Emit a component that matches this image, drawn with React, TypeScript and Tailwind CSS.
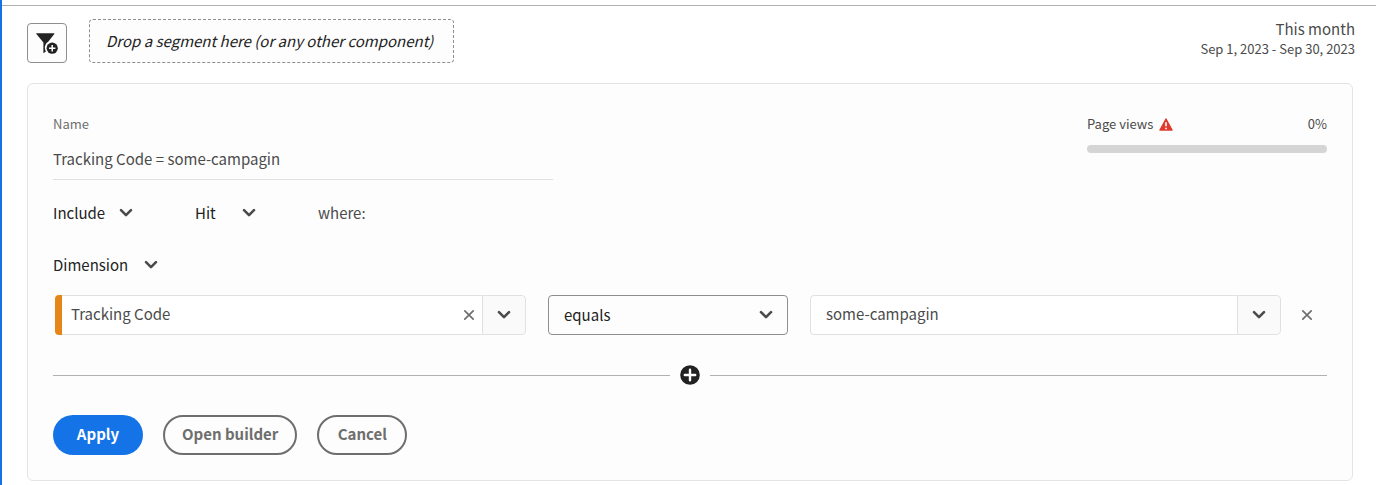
import React, { useState } from 'react';

type IconProps = { className?: string };

const Chevron = ({ className = '' }: IconProps) => (
  <svg viewBox="0 0 14 10" className={`w-3.5 h-2.5 ${className}`} fill="none" stroke="#4b4b4b" strokeWidth="2.6" strokeLinecap="round" strokeLinejoin="round" aria-hidden="true">
    <path d="M2 2.2 L7 7.2 L12 2.2" />
  </svg>
);

const Cross = () => (
  <svg viewBox="0 0 12 12" className="w-3 h-3" fill="none" stroke="#6e6e6e" strokeWidth="1.7" strokeLinecap="round" aria-hidden="true">
    <path d="M1.8 1.8 L10.2 10.2 M10.2 1.8 L1.8 10.2" />
  </svg>
);

const FilterAdd = () => (
  <svg viewBox="0 0 22 22" className="w-[22px] h-[22px]" aria-hidden="true">
    <path d="M0.4 1.2 H18 a0.4 0.4 0 0 1 0.3 0.7 L12.4 9.6 A7 7 0 0 0 9.9 19.4 L7.4 21.2 V10.6 L0.2 1.8 a0.4 0.4 0 0 1 0.2 -0.6 Z" fill="#222" />
    <circle cx="16.2" cy="16.2" r="5.6" fill="#222" />
    <path d="M16.2 13 V19.4 M13 16.2 H19.4" stroke="#fff" strokeWidth="1.5" />
  </svg>
);

const AddCircle = () => (
  <svg viewBox="0 0 20 20" className="w-5 h-5" aria-hidden="true">
    <circle cx="10" cy="10" r="9.8" fill="#222" />
    <path d="M10 4.8 V15.2 M4.8 10 H15.2" stroke="#fff" strokeWidth="2.4" strokeLinecap="round" />
  </svg>
);

const Alert = () => (
  <svg viewBox="0 0 14 13" className="w-3.5 h-[13px]" aria-hidden="true">
    <path d="M6.5 0.6 a0.6 0.6 0 0 1 1 0 L13.6 11.8 a0.6 0.6 0 0 1 -0.5 0.9 H0.9 a0.6 0.6 0 0 1 -0.5 -0.9 Z" fill="#e03a2e" />
    <path d="M7 4.2 V8.3 M7 9.7 V11.2" stroke="#fff" strokeWidth="1.6" />
  </svg>
);

type PickerProps = {
  label: string;
  options: string[];
  className: string;
  chevronClassName?: string;
};

function Picker({ label, options, className, chevronClassName = 'right-0' }: PickerProps) {
  const [value, setValue] = useState(options[0]);

  return (
    <div className="relative flex items-center">
      <select
        aria-label={label}
        value={value}
        onChange={(e) => setValue(e.target.value)}
        className={`appearance-none bg-transparent text-[#222] cursor-pointer ${className}`}
      >
        {options.map((option) => (
          <option key={option}>{option}</option>
        ))}
      </select>
      <Chevron className={`absolute pointer-events-none ${chevronClassName}`} />
    </div>
  );
}

type ComboProps = {
  label: string;
  initial: string;
  dimension?: boolean;
};

function ComboField({ label, initial, dimension = false }: ComboProps) {
  const [value, setValue] = useState(initial);

  return (
    <div className="flex flex-1 min-w-0 h-10 rounded overflow-hidden">
      {dimension && <div className="w-[7px] shrink-0 bg-[#e68619]" />}
      <div className={`flex flex-1 min-w-0 bg-white border-y border-[#e1e1e1] ${dimension ? '' : 'rounded-l border-l'}`}>
        <input
          type="text"
          aria-label={label}
          value={value}
          onChange={(e) => setValue(e.target.value)}
          className={`flex-1 min-w-0 pb-0.5 bg-transparent outline-none ${dimension ? 'pl-[9px]' : 'pl-[15px]'}`}
        />
        {dimension && (
          <button aria-label="Clear" onClick={() => setValue('')} className="w-[26px] flex items-center justify-center">
            <Cross />
          </button>
        )}
      </div>
      <button
        aria-label={`Show ${label} options`}
        className="w-11 shrink-0 flex items-center justify-center rounded-r border border-[#e1e1e1] bg-[#fafafa]"
      >
        <Chevron />
      </button>
    </div>
  );
}

function App() {
  const [name, setName] = useState('Tracking Code = some-campagin');

  return (
    <div className="min-h-screen bg-white border-l-2 border-[#1473e6] font-['Noto_Sans_CJK_SC',sans-serif] text-[15px] leading-6 text-[#4b4b4b]">
      <div className="h-1.5 border-b border-[#b1b1b1]" />

      <header className="flex items-start justify-between pl-[25px] pr-[21px] pt-[13px]">
        <div className="flex items-end gap-[22px]">
          <button
            aria-label="Add segment"
            className="w-10 h-10 flex items-center justify-center rounded border border-[#8e8e8e] bg-[#fdfdfd]"
          >
            <FilterAdd />
          </button>
          <div className="h-11 flex items-center px-4 min-w-[365px] rounded border border-dashed border-[#8e8e8e] bg-[#fdfdfd] italic text-[#222]">
            Drop a segment here (or any other component)
          </div>
        </div>
        <div className="text-right">
          <div className="leading-5">This month</div>
          <div className="text-[13px] leading-5">Sep 1, 2023 - Sep 30, 2023</div>
        </div>
      </header>

      <main className="mt-5 ml-[25px] mr-[23px] px-[25px] pt-[30px] pb-[25px] rounded-md border border-[#e4e4e4] bg-[#fdfdfd]">
        <div className="flex items-start justify-between">
          <div className="w-[500px]">
            <label htmlFor="segment-name" className="block text-[13px] leading-5 text-[#6e6e6e]">
              Name
            </label>
            <input
              id="segment-name"
              type="text"
              value={name}
              onChange={(e) => setName(e.target.value)}
              className="mt-1.5 w-full h-10 pb-0.5 border-b border-[#e1e1e1] bg-transparent outline-none"
            />
          </div>
          <div className="w-60">
            <div className="flex items-center text-[13px] leading-5">
              <span>Page views</span>
              <span className="ml-1.5">
                <Alert />
              </span>
              <span className="ml-auto">0%</span>
            </div>
            <div
              role="progressbar"
              aria-label="Page views"
              aria-valuenow={0}
              className="mt-[11px] h-2 rounded-full bg-[#d5d5d5]"
            />
          </div>
        </div>

        <div className="mt-[17px] flex items-center gap-[62px] h-8">
          <Picker label="Include or exclude" options={['Include', 'Exclude']} className="w-20 h-8" />
          <Picker label="Container" options={['Hit', 'Visit', 'Visitor']} className="w-[61px] h-8" />
          <span>where:</span>
        </div>

        <div className="mt-5 flex h-8">
          <Picker label="Component type" options={['Dimension', 'Metric', 'Date range']} className="w-[105px] h-8" />
        </div>

        <div className="mt-3.5 pl-0.5 flex items-center gap-1.5">
          <div className="flex flex-1 min-w-0 gap-[22px]">
            <ComboField label="Dimension" initial="Tracking Code" dimension />
            <Picker
              label="Operator"
              options={['equals', 'does not equal', 'contains']}
              className="w-60 h-10 pl-[15px] rounded border border-[#8e8e8e]"
              chevronClassName="right-[15px]"
            />
            <ComboField label="Value" initial="some-campagin" />
          </div>
          <button aria-label="Remove rule" className="w-10 h-10 flex items-center justify-center">
            <Cross />
          </button>
        </div>

        <div className="flex items-center h-20">
          <div className="flex-1 h-px bg-[#b1b1b1]" />
          <button aria-label="Add rule" className="w-10 h-10 flex items-center justify-center">
            <AddCircle />
          </button>
          <div className="flex-1 h-px bg-[#b1b1b1]" />
        </div>

        <div className="flex gap-5 font-bold">
          <button className="h-10 min-w-[90px] px-[17px] pb-0.5 rounded-full bg-[#1473e6] text-white">Apply</button>
          <button className="h-10 min-w-[90px] px-[17px] pb-0.5 rounded-full border-2 border-[#6e6e6e] text-[#6e6e6e]">
            Open builder
          </button>
          <button className="h-10 min-w-[90px] px-[17px] pb-0.5 rounded-full border-2 border-[#6e6e6e] text-[#6e6e6e]">
            Cancel
          </button>
        </div>
      </main>
    </div>
  );
}

export default App;
